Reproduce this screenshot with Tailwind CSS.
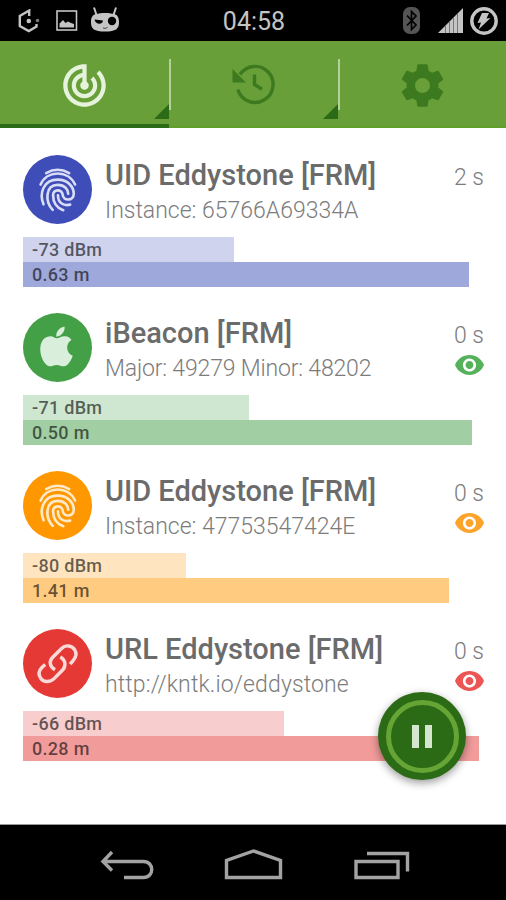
<!DOCTYPE html>
<html lang="en">
<head>
<meta charset="UTF-8">
<meta name="viewport" content="width=device-width, initial-scale=1.0">
<title>Beacons</title>
<script src="https://cdn.jsdelivr.net/npm/@tailwindcss/browser@4"></script>
</head>
<body class="bg-black">
<div class="relative flex h-[900px] w-[506px] flex-col overflow-hidden bg-white font-['Roboto',sans-serif]">

  <!-- Status bar -->
  <header class="grid h-[41px] shrink-0 grid-cols-3 items-center bg-black pr-2 pl-[18px] text-[#c4c4c4]">
    <div class="flex items-center">
      <svg class="h-6 w-[22px]" viewBox="0 0 22 24" fill="none" stroke="currentColor" stroke-width="2.400">
        <path d="M11.200 7V1.500L1.800 7V17L10.800 22L18.500 17.500V15"/>
        <circle cx="10.800" cy="12" r="2.300" fill="currentColor" stroke="none"/>
        <circle cx="19.500" cy="11.500" r="1.800" fill="#777" stroke="none"/>
      </svg>
      <svg class="ml-4 h-[21px] w-[22px]" viewBox="0 0 22 21">
        <rect x="1" y="1" width="19.500" height="19" fill="none" stroke="currentColor" stroke-width="1.600"/>
        <path d="M3.500 17.500V13.500L7 10L9.500 13L12 11.500L15 13L18 14V17.500Z" fill="currentColor"/>
      </svg>
      <svg class="ml-3 h-[27px] w-[30px]" viewBox="0 1 30 27">
        <path d="M4 1.500L6.500 9M26 1.500L23.500 9" stroke="currentColor" stroke-width="2"/>
        <path d="M6 8C11 6.500 19 6.500 24 8C28 9 29 12 29 16C29 23 26 25.500 15 25.500S1 23 1 16C1 12 2 9 6 8Z" fill="currentColor"/>
        <path d="M4.500 13.500L13 14.500C13 18.500 6 19.500 4.500 13.500Z" fill="#000"/>
        <circle cx="22" cy="15" r="4.200" fill="#000"/>
        <path d="M13 22Q15 23 17.500 21.500" fill="none" stroke="#444"/>
      </svg>
    </div>
    <div id="clock" class="pt-px pr-2 text-center text-[25px] leading-none"></div>
    <div class="flex items-center justify-end">
      <svg class="h-[27px] w-[17px]" viewBox="0 0 17 27">
        <rect width="17" height="27" rx="7" fill="#555"/>
        <path d="M4 8.500L13 18L8.500 22.500V4.500L13 9L4 18.500" fill="none" stroke="#000" stroke-width="1.700"/>
      </svg>
      <svg class="ml-[18px] h-[25px] w-[25px]" viewBox="0 0 25 25">
        <path d="M0 25L25 0V25Z" fill="currentColor"/>
        <path d="M7.500 17.500V25M11.500 13.500V25M15.500 9.500V25M19.500 5.500V25" stroke="#777" stroke-width="1"/>
      </svg>
      <svg class="ml-[7px] h-7 w-7" viewBox="0 0 28 28">
        <circle cx="14" cy="14" r="12.200" fill="none" stroke="currentColor" stroke-width="3.400"/>
        <path d="M12 6H19L16.500 11.500L20.500 11L8.500 22.500L11 15.500L7.500 16Z" fill="currentColor"/>
      </svg>
    </div>
  </header>

  <!-- Tabs -->
  <nav class="grid h-[87px] shrink-0 grid-cols-[169px_169px_168px] bg-[#689f38] text-[#3d7a1f]">
    <button class="relative flex items-center justify-center border-b-4 border-[#2c6b16] pt-[5px] text-[#e6f3dc]">
      <svg class="h-[51px] w-[51px]" viewBox="0 0 24 24" fill="currentColor"><path d="M19.070 4.930l-1.410 1.410C19.100 7.790 20 9.790 20 12c0 4.420-3.580 8-8 8s-8-3.580-8-8c0-4.080 3.050-7.440 7-7.930v2.020C8.160 6.570 6 9.030 6 12c0 3.310 2.690 6 6 6s6-2.690 6-6c0-1.660-.67-3.160-1.760-4.240l-1.410 1.410C15.550 9.900 16 10.900 16 12c0 2.210-1.790 4-4 4s-4-1.790-4-4c0-1.860 1.280-3.410 3-3.860v2.140c-.6.350-1 .98-1 1.720 0 1.100.9 2 2 2s2-.9 2-2c0-.74-.4-1.380-1-1.720V2h-1C6.480 2 2 6.480 2 12s4.480 10 10 10 10-4.480 10-10c0-2.760-1.120-5.260-2.930-7.070z"/></svg>
      <span class="absolute top-[18px] -right-[2px] z-10 h-[51px] w-[2px] bg-[#b5d19a]"></span>
      <svg class="absolute right-0 bottom-[5px] h-[15px] w-[15px]" viewBox="0 0 15 15"><path d="M0 15L15 0V15Z" fill="#2c6b16"/></svg>
    </button>
    <button class="relative flex items-center justify-center border-b-2 border-[#5f9f2a] pt-[1px]">
      <svg class="h-[44px] w-[44px]" viewBox="232 62 44 44" fill="none" stroke="currentColor" stroke-width="3.400">
        <path d="M240 74.500A18 18 0 1 1 237.800 89.500"/>
        <path d="M254.500 74.500V84.500L262 89.300"/>
        <path d="M232.500 69V82.500H246Z" fill="currentColor" stroke="none"/>
      </svg>
      <span class="absolute top-[18px] -right-[2px] z-10 h-[51px] w-[2px] bg-[#b5d19a]"></span>
      <svg class="absolute right-0 bottom-[7px] h-[15px] w-[15px]" viewBox="0 0 15 15"><path d="M0 15L15 0V15Z" fill="#2c6b16"/></svg>
    </button>
    <button class="flex items-center justify-center border-b-2 border-[#5f9f2a] pt-[3px]">
      <svg class="h-[51px] w-[51px]" viewBox="0 0 24 24" fill="currentColor"><path d="M19.430 12.980c.04-.32.070-.64.070-.98s-.03-.66-.07-.98l2.110-1.650c.19-.15.240-.42.120-.64l-2-3.460c-.12-.22-.39-.3-.61-.22l-2.490 1c-.52-.4-1.080-.73-1.690-.98l-.38-2.650C14.460 2.180 14.250 2 14 2h-4c-.25 0-.46.180-.49.420l-.38 2.650c-.61.250-1.170.590-1.690.980l-2.490-1c-.23-.09-.49 0-.61.220l-2 3.460c-.13.220-.07.490.12.640l2.110 1.650c-.04.320-.07.650-.07.980s.03.660.07.980l-2.110 1.650c-.19.150-.24.420-.12.640l2 3.460c.12.220.39.300.61.220l2.490-1c.52.400 1.080.730 1.690.980l.38 2.650c.03.240.24.420.49.420h4c.25 0 .46-.18.490-.42l.38-2.650c.61-.25 1.170-.59 1.690-.98l2.490 1c.23.090.49 0 .61-.22l2-3.460c.12-.22.070-.49-.12-.64l-2.110-1.650zM12 15.500c-1.930 0-3.500-1.570-3.500-3.500s1.570-3.500 3.500-3.500 3.500 1.570 3.500 3.500-1.570 3.500-3.500 3.500z"/></svg>
    </button>
  </nav>

  <main id="beacon-list" class="flex min-h-0 flex-1 flex-col gap-[25px] px-[23px] pt-[26px]"></main>

  <!-- Scan button -->
  <button class="absolute top-[692px] left-[378px] flex size-[88px] items-center justify-center rounded-full bg-[#2b6b16] shadow-[0_3px_8px_rgba(0,0,0,0.4)]">
    <span class="flex size-[73px] items-center justify-center gap-[6px] rounded-full border-[5px] border-[#66a535]">
      <span class="h-[23px] w-[7px] bg-[#d5e6cf]"></span>
      <span class="h-[23px] w-[7px] bg-[#d5e6cf]"></span>
    </span>
  </button>

  <!-- Navigation bar -->
  <footer class="flex h-[76px] shrink-0 items-center justify-center border-t border-[#999] bg-black">
    <svg class="h-[40px] w-[320px]" viewBox="93 842.500 320 40" fill="none" stroke="#a3a3a3" stroke-width="3.400">
      <path d="M112 851.500L103 861L112 870M103 861H143.500C154.500 861 154.500 877 143.500 877H124"/>
      <path d="M226.500 877V860L253.500 850.500L280.500 860V877Z"/>
      <path d="M356 861H398V877H356ZM367 853H407.500V871"/>
    </svg>
  </footer>
</div>

<script>
const clock = '04:58';

const icons = {
    uid: `<svg class="h-full w-full" viewBox="69 42 207 210" fill="none" stroke="currentColor" stroke-width="8" stroke-linecap="round">
        <path d="M138 97Q173 77 208 97"/>
        <path d="M121 132C140 87 206 87 226 132"/>
        <path d="M130 192C116 158 130 117 173 117C205 117 222 140 222 160C222 182 190 184 188 162C186 145 159 145 159 164C159 190 172 204 190 210"/>
        <path d="M158 209C134 184 135 133 173 133C196 133 205 148 205 160"/>
        <path d="M174 165C174 188 192 198 211 193"/>
    </svg>`,
    ibeacon: `<svg class="h-full w-full" viewBox="69 36 207 210" fill="currentColor">
        <path d="M169 108C167 92 179 80 194 77C196 92 184 107 169 108Z"/>
        <path d="M170 113C178 113 184 106 196 107C204 107 211 112 215 118C196 129 198 158 219 166C215 178 205 196 194 198C184 199 180 194 170 194C160 194 155 199 147 198C132 195 119 166 120 144C121 118 137 107 151 107C159 107 165 113 170 113Z"/>
    </svg>`,
    url: `<svg class="h-full w-full" viewBox="69 24 207 210" fill="none" stroke="currentColor" stroke-width="10.500" stroke-linecap="butt">
        <path d="M165 148C147 138 147 121 158 110L184 84C198 70 216 75 224 86C233 99 228 111 220 120L211 131"/>
        <path d="M181 109C199 119 198 138 188 149L162 175C148 189 130 185 122 175C113 162 116 150 125 141L135 132"/>
    </svg>`
};

const beacons = [
    { icon: 'uid', name: 'UID Eddystone [FRM]', info: 'Instance: 65766A69334A', age: '2 s', seen: false,
      rssi: '-73 dBm', rssiWidth: 211, dist: '0.63 m', distWidth: 445.5, spacing: '',
      circle: 'bg-[#3f4db8] text-[#d9dcf6]', eye: '', light: 'bg-[#cfd3ed]', dark: 'bg-[#9fa8da]' },
    { icon: 'ibeacon', name: 'iBeacon [FRM]', info: 'Major: 49279 Minor: 48202', age: '0 s', seen: true,
      rssi: '-71 dBm', rssiWidth: 226, dist: '0.50 m', distWidth: 448.5, spacing: 'tracking-[-0.17px]',
      circle: 'bg-[#43a047] text-[#d9eedb]', eye: 'text-[#55b25a]', light: 'bg-[#cfe7d0]', dark: 'bg-[#a1cfa3]' },
    { icon: 'uid', name: 'UID Eddystone [FRM]', info: 'Instance: 47753547424E', age: '0 s', seen: true,
      rssi: '-80 dBm', rssiWidth: 163, dist: '1.41 m', distWidth: 425.5, spacing: '',
      circle: 'bg-[#ff9800] text-[#ffe9c8]', eye: 'text-[#fba32a]', light: 'bg-[#ffe5bf]', dark: 'bg-[#ffcb80]' },
    { icon: 'url', name: 'URL Eddystone [FRM]', info: 'http://kntk.io/eddystone', age: '0 s', seen: true,
      rssi: '-66 dBm', rssiWidth: 261, dist: '0.28 m', distWidth: 455.5, spacing: 'tracking-[0.13px]',
      circle: 'bg-[#e53935] text-[#fbd9d8]', eye: 'text-[#eb5553]', light: 'bg-[#f8cdcd]', dark: 'bg-[#f19c9b]' }
];

function eyeIcon(color) {
    return `<svg class="${color} mt-[5px] h-[20px] w-[29px]" viewBox="1 4.500 22 15" fill="currentColor"><path d="M12 4.500C7 4.500 2.730 7.610 1 12c1.730 4.390 6 7.500 11 7.500s9.270-3.110 11-7.500c-1.730-4.390-6-7.500-11-7.500zM12 17c-2.760 0-5-2.240-5-5s2.240-5 5-5 5 2.240 5 5-2.240 5-5 5zm0-8c-1.660 0-3 1.340-3 3s1.340 3 3 3 3-1.340 3-3-1.340-3-3-3z"/></svg>`;
}

function renderBeacons() {
    let html = '';
    beacons.forEach(b => {
        html += `
        <section class="flex h-[133px] shrink-0 flex-col">
            <div class="flex h-[70px]">
                <div class="${b.circle} mt-[0.5px] size-[69px] shrink-0 rounded-full">${icons[b.icon]}</div>
                <div class="ml-[13px] flex-1 whitespace-nowrap">
                    <h2 class="mt-[4px] text-[29px] leading-[34px] font-medium text-[#6b6b6b]">${b.name}</h2>
                    <p class="${b.spacing} mt-[5px] text-[23px] leading-[28px] font-light text-[#7c7c7c]">${b.info}</p>
                </div>
                <div class="flex flex-col items-end pt-[10px] -mr-px">
                    <span class="text-[23px] leading-[28px] font-light text-[#7c7c7c]">${b.age}</span>
                    ${b.seen ? eyeIcon(b.eye) : ''}
                </div>
            </div>
            <div class="mt-[13px] text-[18px] leading-[25px] font-medium tracking-[0.3px] text-black/60">
                <div class="${b.light} h-[25px] pl-[9px]" style="width: ${b.rssiWidth}px">${b.rssi}</div>
                <div class="${b.dark} h-[25px] pl-[9px]" style="width: ${b.distWidth}px">${b.dist}</div>
            </div>
        </section>`;
    });
    document.getElementById('beacon-list').innerHTML = html;
}

document.getElementById('clock').innerText = clock;
renderBeacons();
</script>
</body>
</html>
